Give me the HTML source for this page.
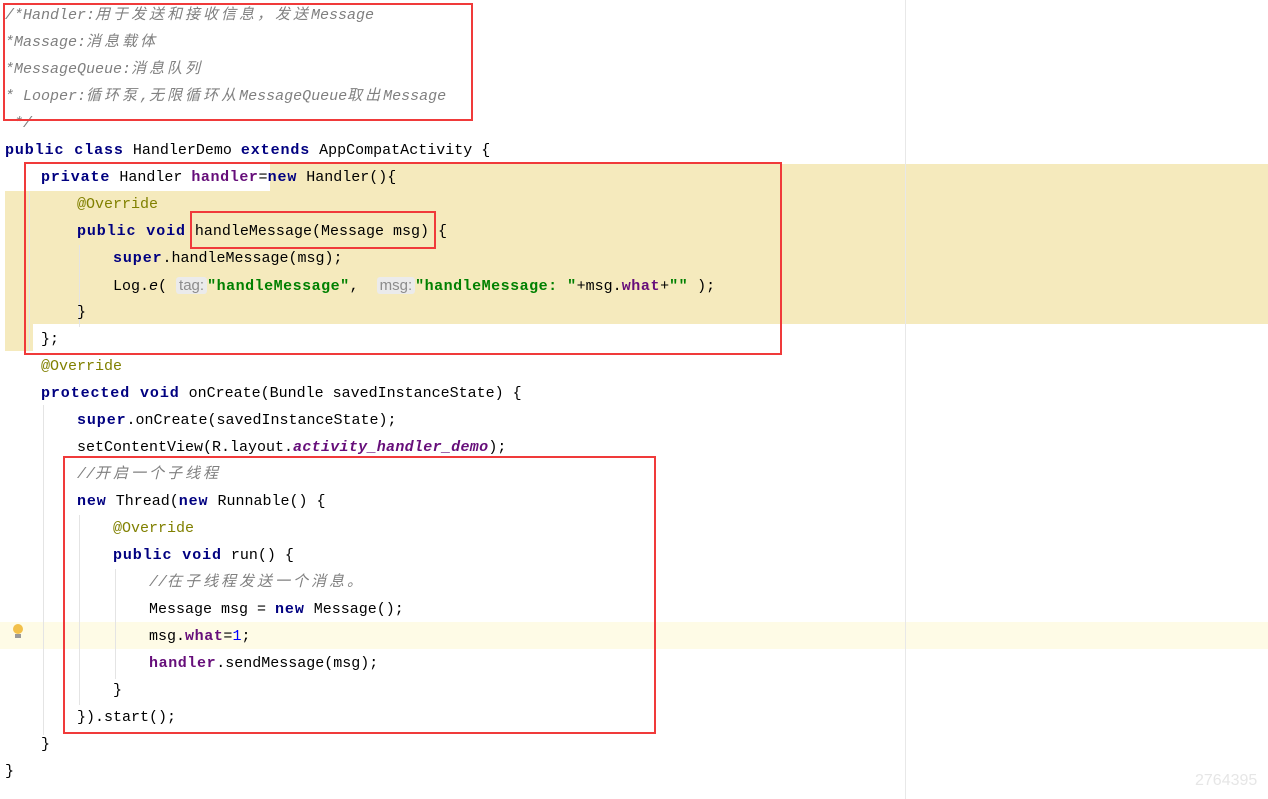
<!DOCTYPE html>
<html><head><meta charset="utf-8"><style>
body{margin:0;width:1268px;height:799px;background:#fff;position:relative;overflow:hidden;font-family:"Liberation Mono","Noto Sans CJK SC",monospace;font-size:15px;color:#000}
.l{position:absolute;height:27px;line-height:27px;white-space:pre}
.k{color:#000080;font-weight:bold;letter-spacing:0.9px}
.cm{color:#808080;font-style:italic}
.a{color:#808000}
.s{color:#008000;font-weight:bold;letter-spacing:0.5px}
.f{color:#660e7a;font-weight:bold;letter-spacing:0.6px}
.fi{color:#660e7a;font-weight:bold;font-style:italic;letter-spacing:0.3px}
.n{color:#0000ff}
.z{letter-spacing:3px}
.h{background:#ebebeb;color:#8c8c8c;font-family:"Liberation Sans",sans-serif;border-radius:3px;padding:0 3px}
.box{position:absolute;border:2px solid #f03a3a;box-sizing:border-box}
.bg{position:absolute;background:#f5eabd}
.g{position:absolute;width:1px;background:#e4e4e4}
</style></head><body>
<div class="bg" style="left:270px;top:164px;width:998px;height:27px"></div>
<div class="bg" style="left:5px;top:191px;width:1263px;height:133px"></div>
<div class="bg" style="left:5px;top:324px;width:28px;height:27px"></div>
<div style="position:absolute;left:0;top:622px;width:1268px;height:27px;background:#fefbe6"></div>
<div style="position:absolute;left:905px;top:0;width:1px;height:799px;background:#e8e8e8"></div>
<div class="g" style="left:29px;top:191px;height:160px"></div>
<div class="g" style="left:79px;top:245px;height:82px"></div>
<div class="g" style="left:43px;top:405px;height:330px"></div>
<div class="g" style="left:79px;top:515px;height:190px"></div>
<div class="g" style="left:115px;top:569px;height:110px"></div>
<div style="position:absolute;left:13px;top:624px;width:10px;height:10px;border-radius:50%;background:#f2c04a"></div>
<div style="position:absolute;left:15px;top:634px;width:6px;height:4px;background:#999"></div>

<div class="l cm" style="left:5px;top:2px">/*Handler:<span class="z">用于发送和接收信息，发送</span>Message</div>
<div class="l cm" style="left:5px;top:29px">*Massage:<span class="z">消息载体</span></div>
<div class="l cm" style="left:5px;top:56px">*MessageQueue:<span class="z">消息队列</span></div>
<div class="l cm" style="left:5px;top:83px">* Looper:<span class="z">循环泵</span>,<span class="z">无限循环从</span>MessageQueue<span class="z">取出</span>Message</div>
<div class="l cm" style="left:14px;top:110px">*/</div>
<div class="l" style="left:5px;top:137px"><span class="k">public class</span> HandlerDemo <span class="k">extends</span> AppCompatActivity {</div>
<div class="l" style="left:41px;top:164px"><span class="k">private</span> Handler <span class="f">handler</span>=<span class="k">new</span> Handler(){</div>
<div class="l a" style="left:77px;top:191px">@Override</div>
<div class="l" style="left:77px;top:218px"><span class="k">public void</span> handleMessage(Message msg) {</div>
<div class="l" style="left:113px;top:245px"><span class="k">super</span>.handleMessage(msg);</div>
<div class="l" style="left:113px;top:272px">Log.<i>e</i>( <span class="h">tag:</span><span class="s">"handleMessage"</span>,  <span class="h">msg:</span><span class="s">"handleMessage: "</span>+msg.<span class="f">what</span>+<span class="s">""</span> );</div>
<div class="l" style="left:77px;top:299px">}</div>
<div class="l" style="left:41px;top:326px">};</div>
<div class="l a" style="left:41px;top:353px">@Override</div>
<div class="l" style="left:41px;top:380px"><span class="k">protected void</span> onCreate(Bundle savedInstanceState) {</div>
<div class="l" style="left:77px;top:407px"><span class="k">super</span>.onCreate(savedInstanceState);</div>
<div class="l" style="left:77px;top:434px">setContentView(R.layout.<span class="fi">activity_handler_demo</span>);</div>
<div class="l cm" style="left:77px;top:461px">//<span class="z">开启一个子线程</span></div>
<div class="l" style="left:77px;top:488px"><span class="k">new</span> Thread(<span class="k">new</span> Runnable() {</div>
<div class="l a" style="left:113px;top:515px">@Override</div>
<div class="l" style="left:113px;top:542px"><span class="k">public void</span> run() {</div>
<div class="l cm" style="left:149px;top:569px">//<span class="z">在子线程发送一个消息。</span></div>
<div class="l" style="left:149px;top:596px">Message msg = <span class="k">new</span> Message();</div>
<div class="l" style="left:149px;top:623px">msg.<span class="f">what</span>=<span class="n">1</span>;</div>
<div class="l" style="left:149px;top:650px"><span class="f">handler</span>.sendMessage(msg);</div>
<div class="l" style="left:113px;top:677px">}</div>
<div class="l" style="left:77px;top:704px">}).start();</div>
<div class="l" style="left:41px;top:731px">}</div>
<div class="l" style="left:5px;top:758px">}</div>

<div class="box" style="left:3px;top:3px;width:470px;height:118px"></div>
<div class="box" style="left:24px;top:162px;width:758px;height:193px"></div>
<div class="box" style="left:190px;top:211px;width:246px;height:38px"></div>
<div class="box" style="left:63px;top:456px;width:593px;height:278px"></div>
<div style="position:absolute;left:1195px;top:772px;color:#e6e6e6;font-family:'Liberation Sans',sans-serif;font-size:16px">2764395</div>
</body></html>
